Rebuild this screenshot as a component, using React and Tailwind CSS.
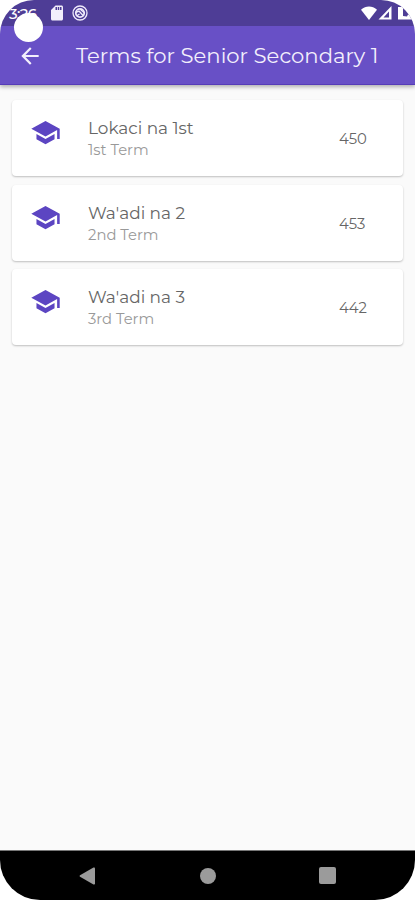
import { MdArrowBack, MdSdCard } from 'react-icons/md';

const terms = [
  { id: 1, name: 'Lokaci na 1st', label: '1st Term', count: 450 },
  { id: 2, name: "Wa'adi na 2", label: '2nd Term', count: 453 },
  { id: 3, name: "Wa'adi na 3", label: '3rd Term', count: 442 },
];

function StatusBar() {
  return (
    <div className="relative flex h-[26px] shrink-0 items-start bg-[#4e3d96] text-white">
      <span className="w-[42px] shrink-0 pl-[9px] pt-[5px] text-[15px] leading-[18px] font-medium tracking-[-0.6px]">3:26</span>
      <MdSdCard className="ml-[6px] mt-[4px] h-[18px] w-[18px] text-[#f3effc]" />
      <svg viewBox="0 0 16 16" className="ml-[6px] mt-[5px] h-4 w-4" fill="none" stroke="#eee9fb">
        <circle cx="8" cy="8" r="7" strokeWidth="1.3" />
        <circle cx="8" cy="8" r="4.2" strokeWidth="1.8" />
        <path d="M3.5 7.5L7 6l4.5 5M8 4l4 3.5M4.5 11l3-2" strokeWidth="1.4" />
      </svg>
      <svg viewBox="0 0 54 21" className="ml-auto h-[21px] w-[54px]" fill="#fff">
        <path d="M0 9.7C5 5.5 11 5.5 16 9.7L8 20z" />
        <path d="M30.5 6v13.5H17.5zM28 11.5L22.5 17.5H28z" fillRule="evenodd" />
        <path d="M37 7h5v9l4 .5 1-2h7v5H37z" />
      </svg>
      <div className="absolute left-[14px] top-[13px] h-[29px] w-[29px] rounded-full bg-white" />
    </div>
  );
}

function AppBar() {
  return (
    <header className="flex h-[59px] shrink-0 items-center border-b border-[#563cb8] bg-[#6850c6] pt-px text-white shadow-[0_2px_4px_rgba(0,0,0,0.3)]">
      <MdArrowBack className="ml-[17px] h-[26px] w-[26px] text-[#f3effc]" />
      <h1 className="ml-[33px] whitespace-nowrap text-[21.15px] leading-7 font-normal text-[#f3effc]">
        Terms for Senior Secondary 1
      </h1>
    </header>
  );
}

function SchoolIcon() {
  return (
    <svg viewBox="0 0 24 24" className="ml-[18px] mt-[17px] h-[31px] w-[31px] shrink-0" fill="#5c45c2">
      <path d="M5 13.18v4L12 21l7-3.82v-4L12 17l-7-3.82zM12 3L1 9l11 6 9-4.91V17h2V9L12 3z" />
    </svg>
  );
}

function TermCard({ term }) {
  return (
    <div className="flex h-[76px] rounded-[4px] bg-white shadow-[0_1px_2px_rgba(0,0,0,0.24)]">
      <SchoolIcon />
      <div className="ml-[27px] pt-[17px]">
        <div className="text-[16.9px] leading-[22px] text-[#666]">{term.name}</div>
        <div className="text-[14.8px] leading-[23px] text-[#999]">{term.label}</div>
      </div>
      <div className="ml-auto mr-[36px] w-[28px] self-center pt-[2px] text-[14.8px] leading-5 text-[#666]">{term.count}</div>
    </div>
  );
}

function NavBar() {
  return (
    <nav className="flex h-[50px] shrink-0 items-center border-t border-[#777] bg-black">
      <svg viewBox="0 0 16 18" className="ml-[79px] h-[18px] w-4" fill="#9b9b9b">
        <path d="M1 8.2L14.5.6Q16 0 16 1.5v15q0 1.5-1.5.9L1 9.8q-1-.8 0-1.6z" />
      </svg>
      <div className="ml-[105px] h-4 w-4 rounded-full bg-[#9b9b9b]" />
      <div className="ml-[103px] h-[17px] w-[17px] rounded-[2px] bg-[#9b9b9b]" />
    </nav>
  );
}

export default function App() {
  return (
    <div className="h-[900px] w-[415px] bg-white font-['Montserrat','Inter',sans-serif]">
      <div className="flex h-full flex-col overflow-hidden rounded-t-[34px] rounded-b-[40px] bg-[#fafafa]">
        <StatusBar />
        <AppBar />
        <main className="flex flex-1 flex-col gap-[8.5px] px-[12px] pt-[15px]">
          {terms.map((term) => (
            <TermCard key={term.id} term={term} />
          ))}
        </main>
        <NavBar />
      </div>
    </div>
  );
}
